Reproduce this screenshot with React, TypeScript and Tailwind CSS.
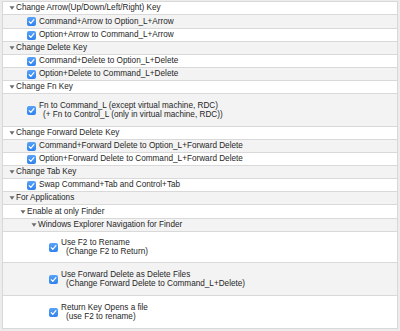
import React from "react";

type Row = {
  kind: "group" | "item";
  level: number;
  h: number;
  lines: string[];
};

const rows: Row[] = [
  { kind: "group", level: 0, h: 13, lines: ["Change Arrow(Up/Down/Left/Right) Key"] },
  { kind: "item", level: 1, h: 14, lines: ["Command+Arrow to Option_L+Arrow"] },
  { kind: "item", level: 1, h: 13, lines: ["Option+Arrow to Command_L+Arrow"] },
  { kind: "group", level: 0, h: 13, lines: ["Change Delete Key"] },
  { kind: "item", level: 1, h: 13, lines: ["Command+Delete to Option_L+Delete"] },
  { kind: "item", level: 1, h: 13, lines: ["Option+Delete to Command_L+Delete"] },
  { kind: "group", level: 0, h: 13, lines: ["Change Fn Key"] },
  {
    kind: "item",
    level: 1,
    h: 33,
    lines: [
      "Fn to Command_L (except virtual machine, RDC)",
      "(+ Fn to Control_L (only in virtual machine, RDC))",
    ],
  },
  { kind: "group", level: 0, h: 13, lines: ["Change Forward Delete Key"] },
  { kind: "item", level: 1, h: 13, lines: ["Command+Forward Delete to Option_L+Forward Delete"] },
  { kind: "item", level: 1, h: 13, lines: ["Option+Forward Delete to Command_L+Forward Delete"] },
  { kind: "group", level: 0, h: 13, lines: ["Change Tab Key"] },
  { kind: "item", level: 1, h: 13, lines: ["Swap Command+Tab and Control+Tab"] },
  { kind: "group", level: 0, h: 13, lines: ["For Applications"] },
  { kind: "group", level: 1, h: 14, lines: ["Enable at only Finder"] },
  { kind: "group", level: 2, h: 13, lines: ["Windows Explorer Navigation for Finder"] },
  { kind: "item", level: 3, h: 31, lines: ["Use F2 to Rename", "(Change F2 to Return)"] },
  {
    kind: "item",
    level: 3,
    h: 33,
    lines: ["Use Forward Delete as Delete Files", "(Change Forward Delete to Command_L+Delete)"],
  },
  { kind: "item", level: 3, h: 33, lines: ["Return Key Opens a file", "(use F2 to rename)"] },
];

function Disclosure() {
  return (
    <svg width="6" height="4" viewBox="0 0 6 4" className="shrink-0">
      <polygon points="0.5,0.3 5.5,0.3 3,3.8" fill="#6b6b6b" />
    </svg>
  );
}

function Check() {
  return (
    <svg width="9" height="9" viewBox="0 0 9 9" className="shrink-0">
      <defs>
        <linearGradient id="cb" x1="0" y1="0" x2="0" y2="1">
          <stop offset="0" stopColor="#58a2f7" />
          <stop offset="1" stopColor="#2f82ee" />
        </linearGradient>
      </defs>
      <rect x="0" y="0" width="9" height="9" rx="2" fill="url(#cb)" />
      <path d="M2.2 4.7 L3.8 6.3 L6.9 2.6" fill="none" stroke="#fff" strokeWidth="1.2" strokeLinecap="round" strokeLinejoin="round" />
    </svg>
  );
}

export default function App() {
  return (
    <div
      className="w-[400px] h-[331px] bg-[#ececec] pt-[1px] pl-[2px] overflow-hidden text-[#262626] text-[8.2px] leading-[9.5px]"
      style={{ fontFamily: '"Liberation Sans", Arial, sans-serif' }}
    >
      <div className="w-[396px] bg-white border-t border-l border-r border-[#d8d8d8]">
        {rows.map((r, i) => {
          const bg = i % 2 === 1 ? "bg-[#f3f3f3]" : "bg-white";
          const padGroup = [6, 17, 28, 39][r.level];
          const padItem = [13, 24, 35, 46][r.level];
          return (
            <div
              key={i}
              className={`${bg} border-b border-[#d9d9d9] flex items-center`}
              style={{ height: r.h, paddingLeft: r.kind === "group" ? padGroup : padItem }}
            >
              {r.kind === "group" ? (
                <div className="flex items-center gap-[1px]">
                  <Disclosure />
                  <span className="whitespace-nowrap">{r.lines[0]}</span>
                </div>
              ) : (
                <div className="flex items-center gap-[3px]">
                  <Check />
                  <div className="flex flex-col">
                    <span className="whitespace-nowrap">{r.lines[0]}</span>
                    {r.lines[1] && (
                      <span className={`whitespace-nowrap ${r.level === 1 ? "pl-[4px]" : "pl-[5px]"}`}>
                        {r.lines[1]}
                      </span>
                    )}
                  </div>
                </div>
              )}
            </div>
          );
        })}
      </div>
    </div>
  );
}
